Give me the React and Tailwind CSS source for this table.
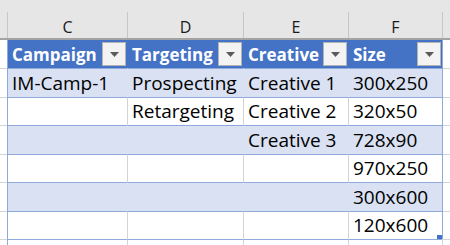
import React from "react";

const COLS = [
  { letter: "C", w: "w-[120px]", head: "Campaign" },
  { letter: "D", w: "w-[116px]", head: "Targeting" },
  { letter: "E", w: "w-[105px]", head: "Creative" },
  { letter: "F", w: "w-[94px]", head: "Size" },
];

const ROWS = [
  { h: "h-[29px]", band: true, cells: ["IM-Camp-1", "Prospecting", "Creative 1", "300x250"] },
  { h: "h-[28px]", band: false, cells: ["", "Retargeting", "Creative 2", "320x50"] },
  { h: "h-[29px]", band: true, cells: ["", "", "Creative 3", "728x90"] },
  { h: "h-[28px]", band: false, cells: ["", "", "", "970x250"] },
  { h: "h-[29px]", band: true, cells: ["", "", "", "300x600"] },
  { h: "h-[28px]", band: false, cells: ["", "", "", "120x600"] },
];

function FilterButton() {
  return (
    <div className="absolute right-[1px] top-[2px] w-[24px] h-[24px] bg-[#f3f3f3] border border-[#b4b4b4] flex items-center justify-center">
      <svg width="9" height="5" viewBox="0 0 9 5">
        <path d="M0 0 H9 L4.5 5 Z" fill="#5a5a5a" />
      </svg>
    </div>
  );
}

export default function App() {
  return (
    <div
      className="w-[450px] h-[245px] bg-white overflow-hidden relative text-black"
      style={{ fontFamily: '"Open Sans", "Noto Sans", sans-serif' }}
    >
      {/* strip above the column letters */}
      <div className="h-[12px] bg-[#e6e6e6]" />

      {/* column letter header */}
      <div className="flex h-[28px] bg-[#e6e6e6] border-b-2 border-[#a3a3a3]">
        <div className="w-[7px]" />
        {COLS.map((c) => (
          <div
            key={c.letter}
            className={`${c.w} border-l border-[#c6c6c6] flex items-end justify-center pb-0 text-[16px] leading-[22px] text-[#1a1a1a]`}
          >
            {c.letter}
          </div>
        ))}
        <div className="w-[8px] border-l border-[#c6c6c6]" />
      </div>

      {/* table header row */}
      <div className="flex h-[28px]">
        <div className="w-[7px] bg-white" />
        {COLS.map((c, i) => (
          <div
            key={c.head}
            className={`${c.w} relative bg-[#4472c4] border-l ${i === 0 ? "border-[#8ea9db]" : "border-[#4472c4]"} flex items-end pl-[4px] pb-[1px] text-[17px] leading-[24px] font-bold text-white whitespace-nowrap`}
          >
            {c.head}
            <FilterButton />
          </div>
        ))}
        <div className="w-px bg-[#8ea9db]" />
        <div className="w-[7px] bg-white" />
      </div>

      {/* data rows */}
      {ROWS.map((r, ri) => (
        <div key={ri} className={`flex ${r.h}`}>
          <div className="w-[7px] border-t border-[#d4d4d4]" />
          {COLS.map((c, ci) => {
            const leftBorder =
              ci === 0 ? "border-l-[#8ea9db]" : r.band ? "border-l-[#d9e1f2]" : "border-l-[#d4d4d4]";
            return (
              <div
                key={c.letter}
                className={`${c.w} border-t border-t-[#8ea9db] border-l ${leftBorder} ${r.band ? "bg-[#d9e1f2]" : "bg-white"} flex items-end pl-[4px] pb-[1px] text-[19px] leading-[25px] whitespace-nowrap overflow-hidden`}
              >
                {r.cells[ci]}
              </div>
            );
          })}
          <div className="w-px bg-[#8ea9db]" />
          <div className="w-[7px] border-t border-[#d4d4d4]" />
        </div>
      ))}

      {/* gridlines below the table */}
      <div className="flex h-[6px]">
        <div className="w-[7px] border-t border-[#d4d4d4]" />
        {COLS.map((c, ci) => (
          <div
            key={c.letter}
            className={`${c.w} border-t border-t-[#8ea9db] border-l ${ci === 0 ? "border-l-[#8ea9db]" : "border-l-[#d4d4d4]"}`}
          />
        ))}
        <div className="w-[8px] border-t border-t-[#d4d4d4] border-l border-l-[#d4d4d4]" />
      </div>

      {/* table resize handle */}
      <div className="absolute left-[437px] top-[235px] w-[5px] h-[4px] bg-[#4472c4]" />
    </div>
  );
}
